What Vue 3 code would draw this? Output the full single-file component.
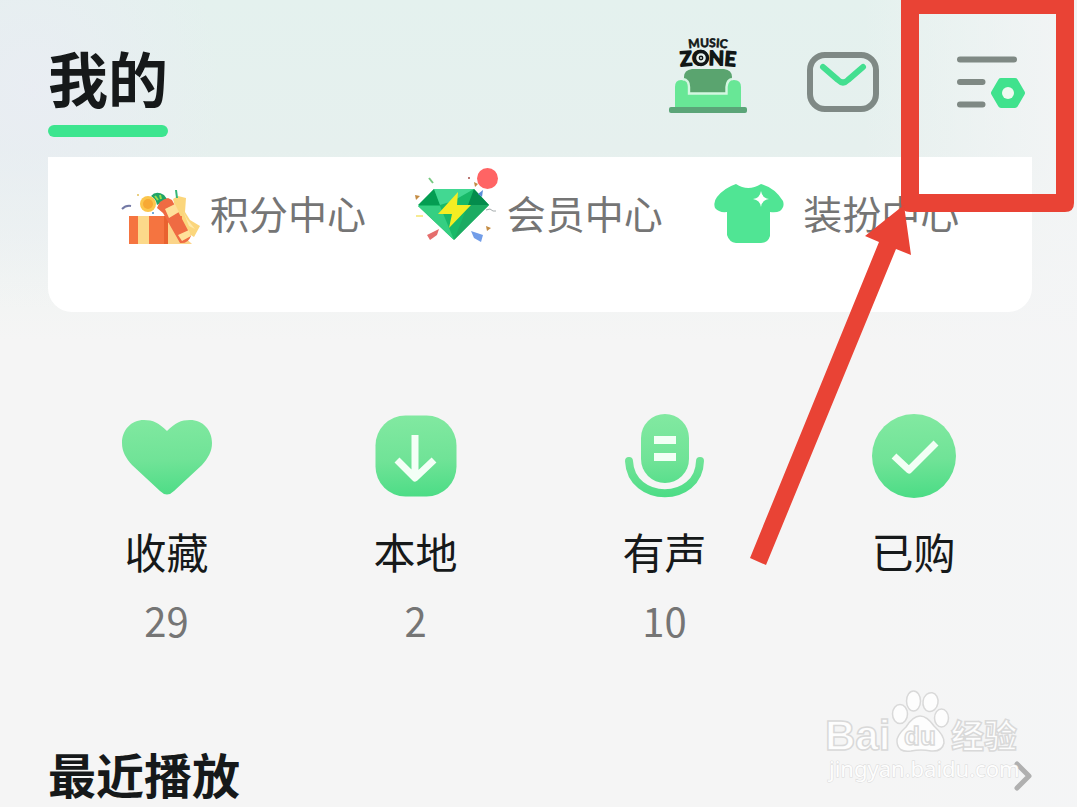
<script setup>
const shortcuts = [
  { id: 'points', label: '积分中心' },
  { id: 'vip', label: '会员中心' },
  { id: 'dress', label: '装扮中心' },
]

const library = [
  { id: 'liked', label: '收藏', count: '29' },
  { id: 'local', label: '本地', count: '2' },
  { id: 'audio', label: '有声', count: '10' },
  { id: 'bought', label: '已购', count: '' },
]
</script>

<template>
  <main class="page">
    <header class="header">
      <h1 class="title">我的</h1>
      <div class="actions">
        <button class="action" type="button" aria-label="Music Zone">
          <svg width="78" height="80" viewBox="669 35 78 80">
            <defs>
              <path id="arc-top" d="M680 50 Q708 44 736 50" />
              <path id="arc-low" d="M675 67 Q708 63 741 67" />
            </defs>
            <g class="zone-text">
              <text font-size="12" stroke-width="0.6"><textPath href="#arc-top" startOffset="50%" text-anchor="middle">MUSIC</textPath></text>
              <text font-size="20" stroke-width="1.4"><textPath href="#arc-low" startOffset="50%" text-anchor="middle">ZONE</textPath></text>
            </g>
            <circle cx="701" cy="58" r="6.5" fill="#e7f3ef" stroke="#111616" stroke-width="3.4" />
            <circle cx="701" cy="58" r="2.4" fill="#111616" />
            <circle cx="701" cy="58" r="0.9" fill="#e7f3ef" />
            <path d="M692 69 H724 Q732 70 732 77 V93 H684 V77 Q684 70 692 69Z" fill="#5aa46f" />
            <path d="M675 108 V87 Q675 80 681 80 Q688 80 688 87 V94 H727 V87 Q727 80 734 80 Q741 80 741 87 V108Z" fill="#68e796" />
            <path d="M683 79 Q689 80 689 87 V93.5 H726.500 V87 Q727 80 732 79" fill="none" stroke="#d3f7e1" stroke-width="2.4" />
            <rect x="669" y="107" width="78" height="6" rx="2" fill="#5ba578" />
          </svg>
        </button>
        <button class="action" type="button" aria-label="消息">
          <svg width="72" height="80" viewBox="807 35 72 80">
            <rect x="810" y="55" width="66" height="54" rx="15" fill="none" stroke="#7f8985" stroke-width="6" />
            <path d="M823 67 L838 80 Q843 85 848 80 L863 67" fill="none" stroke="#43df90" stroke-width="6" stroke-linecap="round" />
          </svg>
        </button>
        <button class="action wide" type="button" aria-label="设置">
          <svg width="70" height="80" viewBox="956 35 70 80">
            <path d="M960 59.500 H1014 M960 82 H982.500 M960 104.500 H982.500" stroke="#7f8984" stroke-width="6" stroke-linecap="round" />
            <path d="M1001 81 H1015 L1022 93 L1015 105 H1001 L994 93Z" fill="#40e28d" stroke="#40e28d" stroke-width="6" stroke-linejoin="round" />
            <circle cx="1008" cy="93" r="6" fill="#effaf1" />
          </svg>
        </button>
      </div>
    </header>

    <nav class="card">
      <a v-for="s in shortcuts" :key="s.id" class="shortcut" href="#">
        <svg v-if="s.id === 'points'" width="88" height="96" viewBox="114 167 88 96" aria-hidden="true">
          <path d="M173 199 L178 196 L186 198 L185 212 L190 220 L200 226 L194 237 L181 229Z" fill="#fbd67c" />
          <path d="M183 211 L187 219 L195 229 L189 226Z" fill="#ffe9a8" />
          <rect x="129" y="216" width="53" height="28" fill="#f57440" />
          <path d="M138 216 h11 v28 h-11z M168 216 h10 v28 h-10z" fill="#fcd98a" />
          <path d="M164 216 h5 v28 h-5z" fill="#e9622f" />
          <path d="M168 222 L192 244 H168Z" fill="#fbd489" />
          <path d="M151 196 Q156 190 164 195 L167 199 L157 205 Q156 199 151 196Z" fill="#20a468" />
          <path d="M155 196 l3 4 M160 195 l1 4" stroke="#9be04b" stroke-width="2" />
          <path d="M157 208 Q159 200 168 198 L172 200 L191 236 Q188 244 180 243 L163 213Z" fill="#ef6b43" />
          <path d="M165 209 L175 204 L179 212 L169 218Z M178 235 L189 230 L191 236 L182 241Z" fill="#ffe09a" />
          <circle cx="148" cy="204" r="8" fill="#fbc64d" />
          <circle cx="148" cy="204" r="5" fill="#f7a934" />
          <path d="M122 209 Q126 205 131 206" fill="none" stroke="#7379a5" stroke-width="2" />
          <path d="M176 190 L177 198" stroke="#35b777" stroke-width="2" />
          <circle cx="138" cy="195" r="1" fill="#e4c15b" />
          <circle cx="153" cy="213" r="1" fill="#448fd0" />
        </svg>
        <svg v-else-if="s.id === 'vip'" width="88" height="96" viewBox="411 167 88 96" aria-hidden="true">
          <path d="M434 189 H474 L489 205 L454 240 L418 206Z" fill="#18b968" />
          <path d="M434 189 L440 205 H418Z" fill="#049d52" />
          <path d="M434 189 H474 L453 201 L440 205Z" fill="#42d892" />
          <path d="M474 189 L489 205 H468Z" fill="#048c4c" />
          <path d="M418 206 H440 L454 240Z" fill="#35cf82" />
          <path d="M468 205 H489 L454 240Z" fill="#1cab62" />
          <path d="M458 192 L438 214 H452 L449 228 L471 205 H457Z" fill="#f5ed23" />
          <circle cx="487.500" cy="178.500" r="10.500" fill="#ff6464" />
          <path d="M427 235 L439 229 L437 235 L430 240Z" fill="#e56e6d" />
          <path d="M471 231 L483 235 L481 242 L474 238Z" fill="#729de8" />
          <path d="M478 194 l5 -4 -1 7z" fill="#5a8cd8" />
          <path d="M415 195 l5 1 -4 4z M486 226 l5 2 -4 3z M474 182 l4 2 -3 3z" fill="#c48b42" />
          <path d="M429 178 l4 5" stroke="#76c980" stroke-width="2" />
          <path d="M416 216 h7" stroke="#f7eb93" stroke-width="2" />
          <path d="M486 210 l4 -1 3 2 h3" fill="none" stroke="#a6adae" stroke-width="1" />
          <circle cx="469" cy="178" r="1" fill="#a44c47" />
        </svg>
        <svg v-else width="88" height="96" viewBox="707 167 88 96" aria-hidden="true">
          <path d="M736 184 Q748 192 761 184 Q775 188 783 201 Q785 207 780 211 Q776 213 770 212 V236 Q768 243 761 243 H736 Q729 242 727 235 V212 Q719 213 715 208 Q713 202 717 197 Q724 188 736 184Z" fill="#50e594" />
          <path d="M761 191 Q762 198 769 199 Q762 200 761 207 Q760 200 753 199 Q760 198 761 191Z" fill="#fff" />
        </svg>
        <span class="shortcut-label">{{ s.label }}</span>
      </a>
    </nav>

    <nav class="library">
      <a v-for="item in library" :key="item.id" class="entry" href="#">
        <svg width="92" height="88" viewBox="-46 -44 92 88" aria-hidden="true">
          <defs>
            <linearGradient :id="'fill-' + item.id" gradientUnits="userSpaceOnUse" x1="0" y1="-42" x2="4" y2="42">
              <stop offset="0" stop-color="#82e9a1" />
              <stop offset="0.55" stop-color="#70e397" />
              <stop offset="1" stop-color="#4bdc85" />
            </linearGradient>
          </defs>
          <g :fill="'url(#fill-' + item.id + ')'">
            <path v-if="item.id === 'liked'" d="M0 -25 C8 -33 14 -36 23 -36 C36 -36 45 -26 45 -13 C45 -4 41 2 35 9 L7 35 Q0 42 -7 35 L-35 9 C-41 2 -45 -4 -45 -13 C-45 -26 -36 -36 -23 -36 C-14 -36 -8 -33 0 -25Z" />
            <template v-else-if="item.id === 'local'">
              <rect x="-40.500" y="-40.500" width="81" height="81" rx="30" />
              <path d="M-1 -21 V21 M-19 4 L-1 22 L18 4" fill="none" stroke="#f3fff6" stroke-width="7" stroke-linejoin="round" />
            </template>
            <template v-else-if="item.id === 'audio'">
              <rect x="-24" y="-42" width="48" height="69" rx="24" />
              <path d="M-11 -16 H11 M-11 1 H11" stroke="#f2fff5" stroke-width="8" />
              <path d="M-36 5 C-34 48 34 48 35 5" fill="none" :stroke="'url(#fill-' + item.id + ')'" stroke-width="8" stroke-linecap="round" />
            </template>
            <template v-else>
              <circle r="42" />
              <path d="M-20 0 L-5 14 L22 -13" fill="none" stroke="#f2fff5" stroke-width="7" stroke-linejoin="round" />
            </template>
          </g>
        </svg>
        <span class="label">{{ item.label }}</span>
        <span class="count">{{ item.count }}</span>
      </a>
    </nav>

    <a class="recent" href="#">
      <h2>最近播放</h2>
      <svg width="20" height="32" viewBox="0 0 20 32" aria-hidden="true">
        <path d="M4 4 L16 16 L4 28" fill="none" stroke="#b0b0b0" stroke-width="5" stroke-linecap="round" stroke-linejoin="round" />
      </svg>
    </a>

    <svg class="watermark" width="200" height="100" viewBox="822 687 200 100" aria-label="Baidu 经验">
      <g fill="#fdfdfd" stroke="#d9d9d9" stroke-width="1.500">
        <ellipse cx="900" cy="715" rx="7.500" ry="9.500" />
        <ellipse cx="913.500" cy="702" rx="7" ry="10" />
        <ellipse cx="930.500" cy="703" rx="7.500" ry="9.500" transform="rotate(10 930 703)" />
        <ellipse cx="941.500" cy="719" rx="7" ry="9" />
        <path d="M920 717 Q927 717 934 727 Q945 737 944 744 Q942 753 931 752 Q921 750 911 752 Q898 754 897 743 Q896 737 906 728 Q913 717 920 717Z" />
        <g class="mark">
          <text x="825" y="751" font-size="42">Bai</text>
          <text x="904" y="746" font-size="26">du</text>
          <text class="cjk" x="951" y="749" font-size="33">经验</text>
        </g>
        <text class="url" x="829" y="778" font-size="22">jingyan.baidu.com</text>
      </g>
    </svg>

    <svg class="callout" width="330" height="570" viewBox="747 0 330 570" aria-hidden="true">
      <rect x="901" y="-4" width="173" height="216" rx="9" fill="none" />
      <path fill-rule="evenodd" d="M901 0 H1074 V203 Q1074 212 1065 212 H910 Q901 212 901 203Z M919 14 V194 H1056 V14Z" fill="#e94335" />
      <path d="M904 205 L911 255 L896 249 L766 565 L750 558 L879 242 L865 236Z" fill="#e94335" />
    </svg>
  </main>
</template>

<style>
body {
  margin: 0;
  background: #f5f5f5;
}
</style>

<style scoped>
.page {
  position: relative;
  overflow: hidden;
  font-family: "Noto Sans CJK SC", sans-serif;
  color: #16191a;
  background:
    radial-gradient(ellipse 190px 220px at 3% 90px, rgba(234, 236, 244, 0.8), transparent),
    linear-gradient(to right, rgba(245, 245, 246, 0) 80%, rgba(244, 245, 246, 0.8) 98%),
    linear-gradient(#e4f1ee 0, #e6f0ee 150px, #f1f4f3 280px, #f5f5f5 340px);
}
.header {
  display: flex;
  justify-content: space-between;
  align-items: flex-start;
  padding: 35px 51px 20px 48px;
}
.title {
  margin: 9px 0 0;
  font-size: 60px;
  line-height: 66px;
  font-weight: 700;
}
.title::after {
  content: "";
  display: block;
  height: 12px;
  margin-top: 15px;
  border-radius: 6px;
  background: #3de58f;
}
.actions {
  display: flex;
  gap: 60px;
}
.action {
  display: block;
  padding: 0;
  border: 0;
  background: none;
}
.wide {
  margin-left: 17px;
}
svg {
  display: block;
  flex: none;
}
.zone-text {
  font-family: Lato, sans-serif;
  font-weight: 700;
  fill: #111616;
  stroke: #111616;
  stroke-linejoin: round;
}
a {
  color: inherit;
  text-decoration: none;
}
.card {
  display: grid;
  grid-template-columns: repeat(3, 1fr);
  margin: 0 45px 0 48px;
  padding: 10px 28px 49px 66px;
  border-radius: 0 0 24px 24px;
  background: #fff;
}
.shortcut {
  display: flex;
  align-items: center;
  gap: 8px;
  font-size: 39px;
  line-height: 60px;
  white-space: nowrap;
  color: #757575;
}
.shortcut-label {
  padding-bottom: 6px;
}
.library {
  display: grid;
  grid-template-columns: repeat(4, 1fr);
  margin: 100px 39px 0 42px;
}
.entry {
  display: flex;
  flex-direction: column;
  align-items: center;
}
.label {
  margin-top: 21px;
  font-size: 42px;
  line-height: 60px;
}
.count {
  height: 48px;
  margin-top: 15px;
  font-size: 40px;
  line-height: 48px;
  color: #757575;
}
.recent {
  display: flex;
  justify-content: space-between;
  align-items: center;
  margin-top: 102px;
  padding: 0 44px 0 48px;
}
.recent h2 {
  margin: 0;
  padding-bottom: 6px;
  font-size: 48px;
  line-height: 54px;
  font-weight: 700;
}
.watermark {
  position: absolute;
  right: 55px;
  bottom: 20px;
}
.mark {
  font-family: "Liberation Sans", sans-serif;
  font-weight: 700;
}
.cjk {
  font-family: "Noto Sans CJK SC", sans-serif;
}
.url {
  font-family: "Noto Sans", sans-serif;
  stroke-width: 1px;
  paint-order: stroke;
}
.callout {
  position: absolute;
  top: 0;
  right: 0;
  pointer-events: none;
}
</style>
